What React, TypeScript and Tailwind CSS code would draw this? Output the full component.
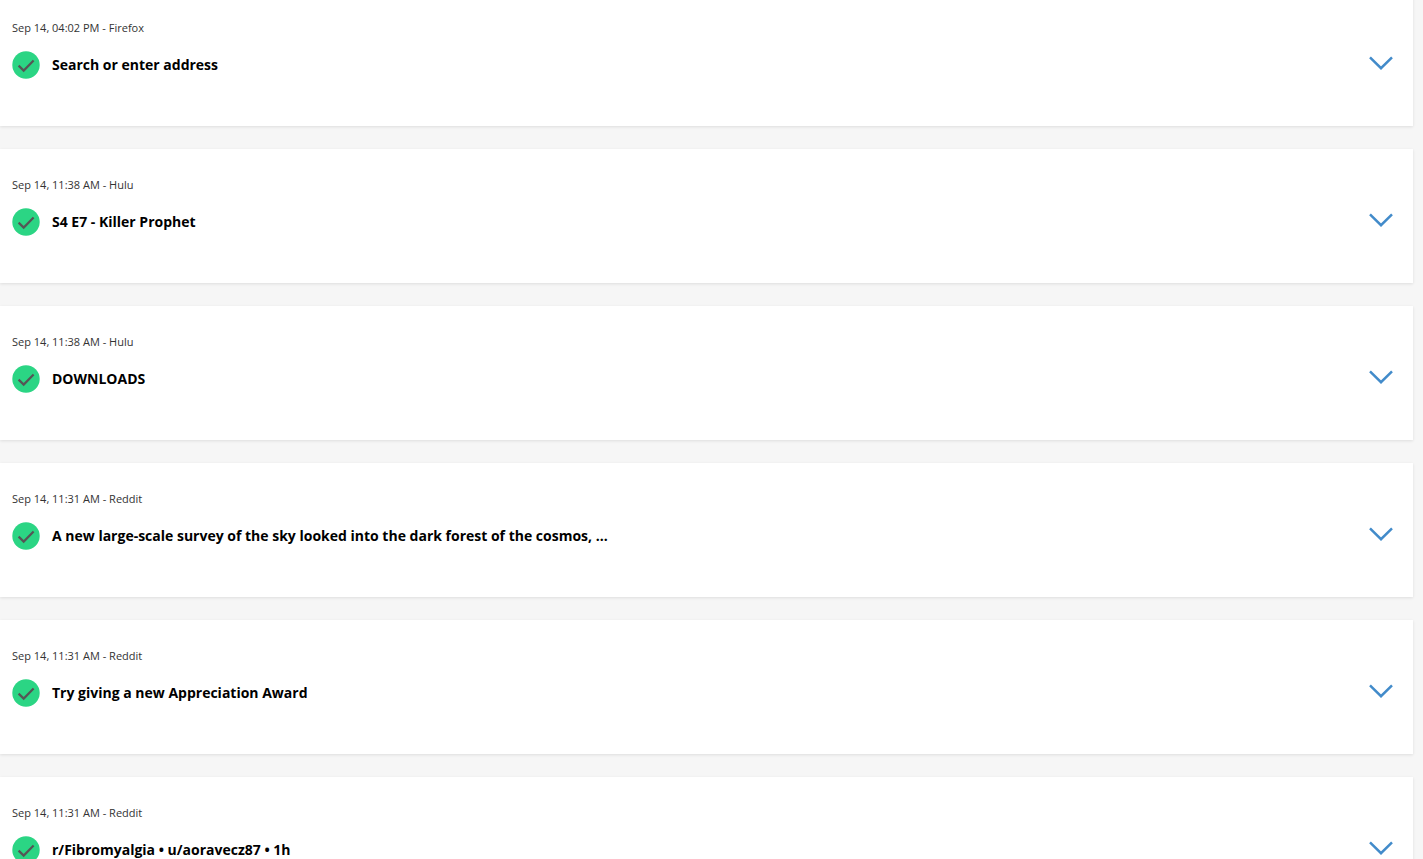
import React from 'react';

interface Activity {
  id: number;
  time: string;
  app: string;
  title: string;
}

const ACTIVITIES: Activity[] = [
  { id: 1, time: 'Sep 14, 04:02 PM', app: 'Firefox', title: 'Search or enter address' },
  { id: 2, time: 'Sep 14, 11:38 AM', app: 'Hulu', title: 'S4 E7 - Killer Prophet' },
  { id: 3, time: 'Sep 14, 11:38 AM', app: 'Hulu', title: 'DOWNLOADS' },
  {
    id: 4,
    time: 'Sep 14, 11:31 AM',
    app: 'Reddit',
    title: 'A new large-scale survey of the sky looked into the dark forest of the cosmos, ...',
  },
  { id: 5, time: 'Sep 14, 11:31 AM', app: 'Reddit', title: 'Try giving a new Appreciation Award' },
  { id: 6, time: 'Sep 14, 11:31 AM', app: 'Reddit', title: 'r/Fibromyalgia • u/aoravecz87 • 1h' },
];

const CheckBadge: React.FC = () => (
  <svg viewBox="0 0 28 28" className="w-7 h-7 shrink-0" aria-hidden="true">
    <circle cx="14" cy="14" r="13.7" fill="#2bd584" />
    <path d="M6.6 14.6 L11.7 19.6 L21.6 9.6" fill="none" stroke="#555555" strokeWidth="2.2" />
  </svg>
);

const ChevronDown: React.FC = () => (
  <svg viewBox="0 0 24 24" className="w-6 h-6" aria-hidden="true">
    <path d="M1 6.4 L12 17.2 L23 6.4" fill="none" stroke="#428bca" strokeWidth="2.5" />
  </svg>
);

const ActivityCard: React.FC<{ activity: Activity }> = ({ activity }) => (
  <li className="bg-white pt-7 pb-[47px] pl-3 pr-5 shadow-[0_1px_3px_rgba(0,0,0,0.1)]">
    <p className="text-[11px] leading-4 text-[#333333]">
      {activity.time} - {activity.app}
    </p>
    <div className="mt-[15px] flex items-start justify-between gap-6">
      <div className="flex items-center gap-3">
        <CheckBadge />
        <h2 className="text-sm leading-5 font-bold text-black">{activity.title}</h2>
      </div>
      <button type="button" aria-label={`Show details for ${activity.title}`} className="shrink-0 cursor-pointer">
        <ChevronDown />
      </button>
    </div>
  </li>
);

const App: React.FC = () => {
  return (
    <main className="h-screen overflow-hidden bg-[#f6f6f6] font-['Open_Sans',sans-serif]">
      <ul className="-mt-2 mr-[10px] flex flex-col gap-[23px]">
        {ACTIVITIES.map((activity) => (
          <ActivityCard key={activity.id} activity={activity} />
        ))}
      </ul>
    </main>
  );
};

export default App;
